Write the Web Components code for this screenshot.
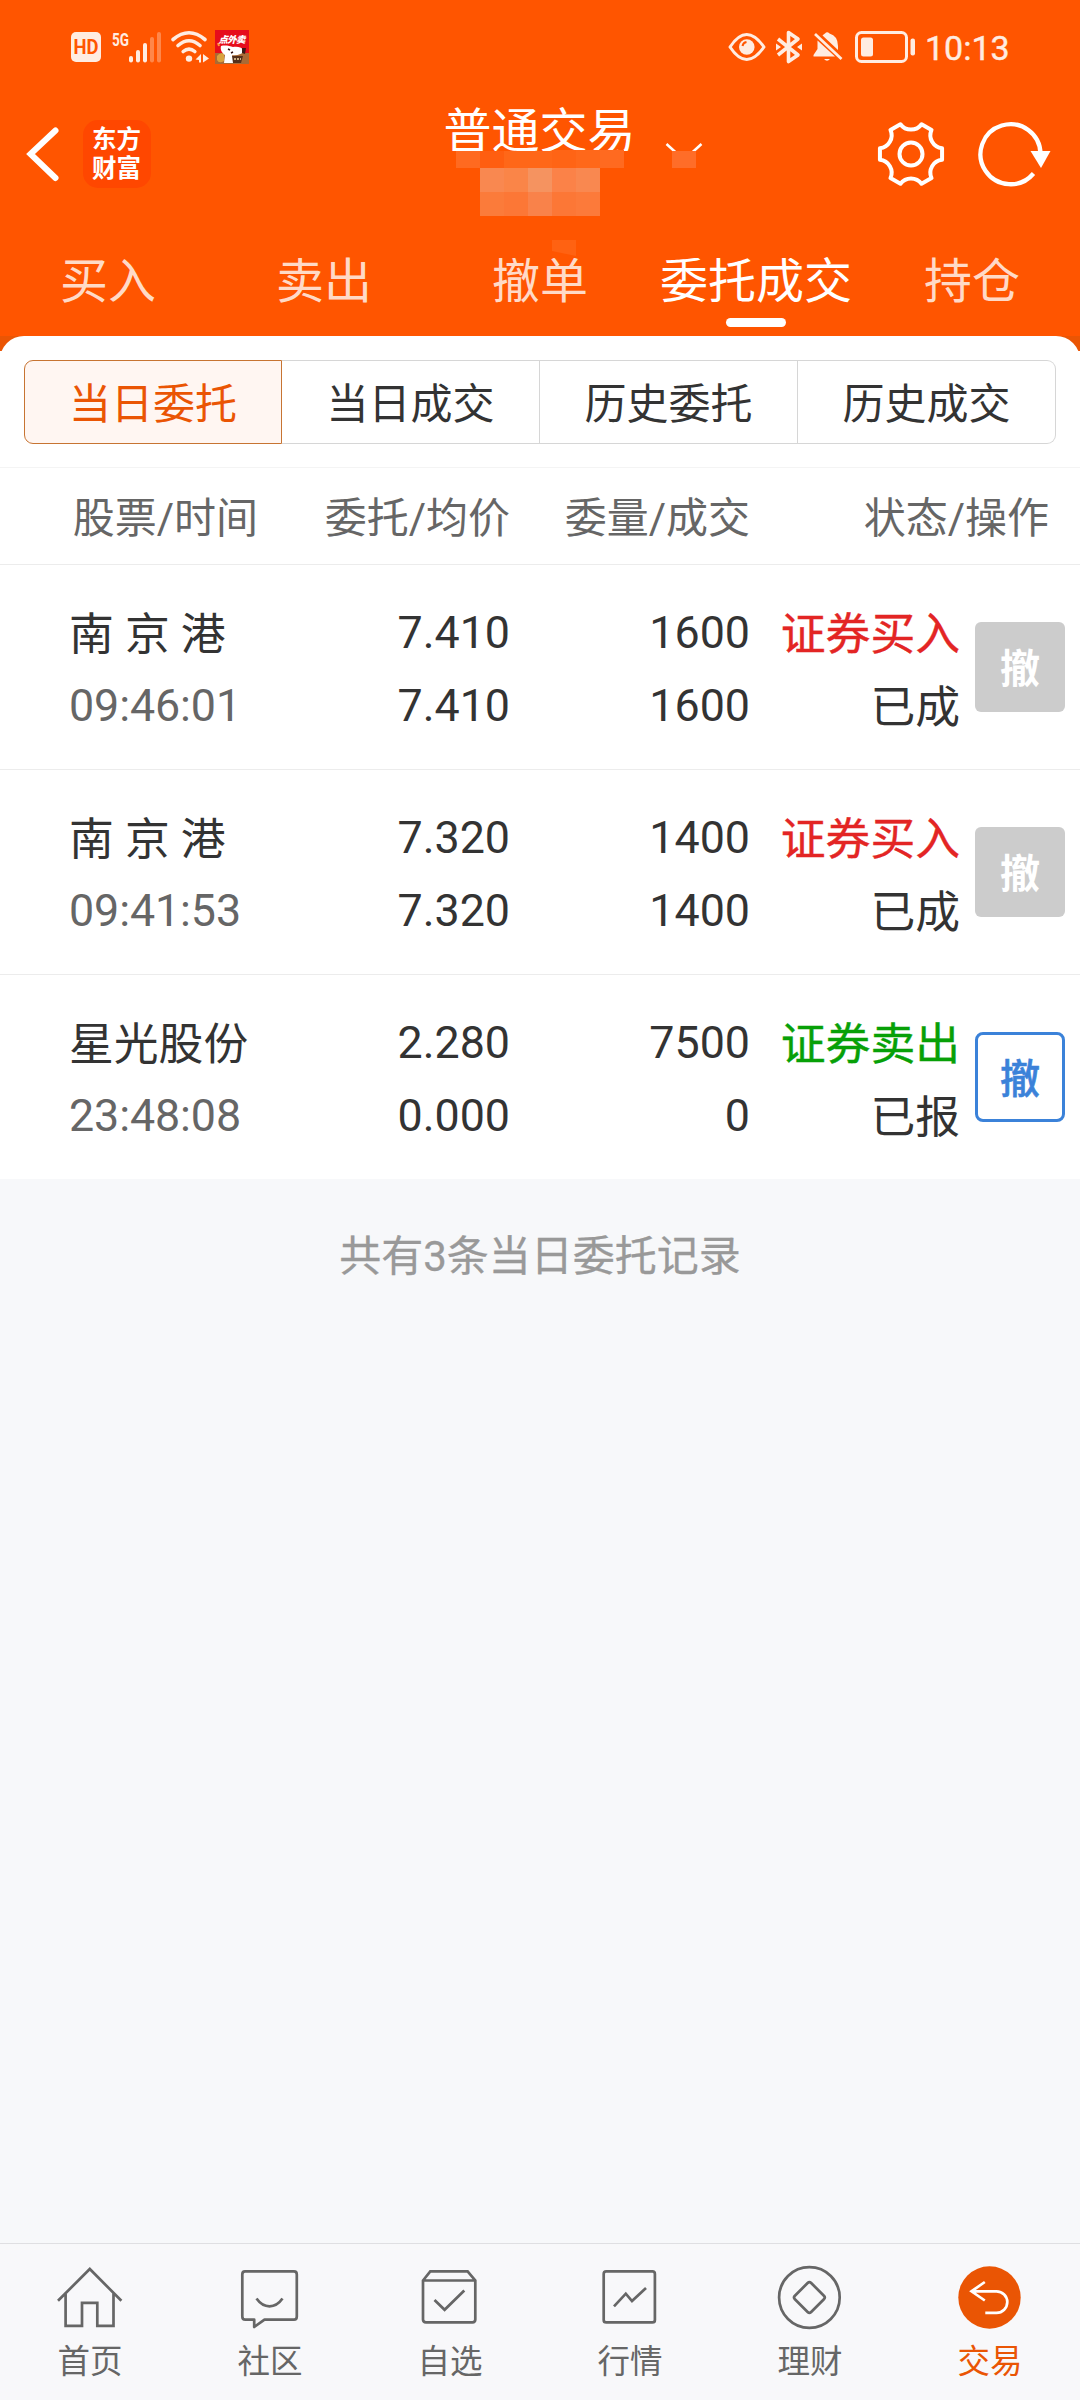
<!DOCTYPE html>
<html lang="zh-CN">
<head>
<meta charset="utf-8">
<title>普通交易</title>
<style>
html,body{margin:0;padding:0}
body{width:1080px;height:2400px;overflow:hidden;background:#f7f8fa;font-family:Roboto,"Noto Sans CJK SC",sans-serif;color:#333}
</style>
</head>
<body>
<trade-app></trade-app>
<script>
const define = (name, render) => customElements.define(name, class extends HTMLElement {
  connectedCallback() {
    if (this.shadowRoot) return;
    this.attachShadow({ mode: 'open' }).innerHTML = render(this);
  }
});

// Gear outline: six flat teeth joined by concave arcs.
const gear = (() => {
  let d = '';
  const p = a => { const r = a * Math.PI / 180; return (34 + 31.6 * Math.cos(r)).toFixed(2) + ' ' + (34 + 31.6 * Math.sin(r)).toFixed(2); };
  for (let k = 0; k < 6; k++) d += (k ? 'A13 13 0 0 0 ' : 'M') + p(60 * k - 10.5) + 'L' + p(60 * k + 10.5);
  return d + 'A13 13 0 0 0 ' + p(-10.5) + 'Z';
})();

const L = 'fill="none" stroke="currentColor"';
const icons = {
  hd: [30, 30, `<rect width="30" height="30" rx="5" fill="currentColor"/><text x="15" y="22.3" text-anchor="middle" font-size="20" font-weight="700" textLength="25" lengthAdjust="spacingAndGlyphs" fill="#ff5500">HD</text>`],
  signal: [50, 32, `<text x="0" y="14.5" font-size="18.5" font-weight="700" textLength="17" lengthAdjust="spacingAndGlyphs" fill="currentColor">5G</text>
    <g fill="currentColor"><rect x="17" y="25" width="4" height="6.5" rx="2"/><rect x="24" y="19" width="4" height="12.5" rx="2"/><rect x="31" y="12" width="4" height="19.5" rx="2"/><g opacity=".33"><rect x="38" y="6" width="4" height="25.5" rx="2"/><rect x="45" y="1" width="4" height="30.5" rx="2"/></g></g>`],
  wifi: [38, 32, `<g ${L} stroke-width="3.6" stroke-linecap="round"><path d="M2 8.500Q18-5 34 8.500"/><path d="M7 14.500Q18 5 29 14.500"/><path d="M12.2 20.500Q18 15.6 23.8 20.500"/></g><circle cx="18" cy="27.6" r="3.2" fill="currentColor"/><path d="M30 23v8.5h-2v-2.500l-3.500-.5zM32 31.500v-8.500l6 4.500z" fill="currentColor"/>`],
  promo: [34, 34, `<rect width="34" height="34" fill="#e60d1c"/><path d="M0 23h34v11H0z" fill="#a96a35"/><path d="M2 26q3-4 7-2v7q-5 3-7-1z" fill="#d9a23e"/><path d="M6 16c4-1 9 0 12 1 4-1 9 0 12 4-3 3-8 5-13 4l3 8H9l1-8c-3-2-5-5-4-9z" fill="#fff"/><path d="M27 18l4 0-1 6-3-1z" fill="#3a1c16"/><path d="M13 19l2 1m3 2l-2 1" stroke="#311" stroke-width="1.5"/><path d="M17 26h11l-2 7h-8z" fill="#54301b"/><path d="M19 29h7" stroke="#f2d7a4" stroke-width="1.6" stroke-dasharray="2 1"/><path d="M3 13l1 3" stroke="#ff9b2e" stroke-width="2"/><text x="3.5" y="13" font-size="9.5" font-weight="900" font-style="italic" textLength="27" fill="#fff">点外卖</text>`],
  eye: [38, 30, `<path d="M2 15Q18.500-10 36 15Q18.500 40 2 15Z" ${L} stroke-width="3" stroke-linejoin="round"/><circle cx="18.800" cy="15" r="7.800" fill="currentColor"/><path d="M14.500 14a5 5 0 0 1 4-4" fill="none" stroke="#ff5500" stroke-width="2"/>`],
  bt: [28, 34, `<path d="M3 9L23 25 13.500 31.500V2.500L23 9 3 25" ${L} stroke-width="3.6" stroke-linejoin="round"/><path d="M1 13.500l5 3.500-5 3.500zM27 13.500l-5 3.500 5 3.500z" fill="currentColor"/>`],
  bell: [30, 32, `<path d="M9.500 4.500Q11 3 12 2.500Q14 0 16.500 2.500Q25 5 25 15v4zM4.500 9.500l17.500 16H.5V24l4-6z" fill="currentColor"/><path d="M2 3L28.500 28" stroke="currentColor" stroke-width="2.800"/><path d="M11 28h6q-3 3.500-6 0z" fill="currentColor"/>`],
  battery: [61, 32, `<rect x="1.500" y="1.500" width="50" height="29" rx="5" ${L} stroke-width="3"/><rect x="6" y="6.500" width="12" height="19" rx="2.500" fill="currentColor"/><rect x="55.500" y="7.500" width="4.500" height="17" rx="2" fill="currentColor"/>`],
  back: [32, 58, `<path d="M28.500 5.500L3.500 29l25 24" ${L} stroke-width="6" stroke-linecap="round"/>`],
  gear: [68, 68, `<path d="${gear}" ${L} stroke-width="4" stroke-linejoin="round"/><circle cx="34" cy="34" r="11.500" ${L} stroke-width="4"/>`],
  refresh: [74, 68, `<path d="M56.500 53.500A30 30 0 1 1 63.500 34" ${L} stroke-width="4.300"/><path d="M53.500 31h20L64 48z" fill="currentColor"/>`],
  home: [68, 68, `<path d="M2 37.800L33.800 6 65.400 37.800M9.600 30.500V62.800H26V39.800H41.300V62.800H57.500V30.500" ${L} stroke-width="2.700"/>`],
  chat: [68, 68, `<path d="M9 8.400H58Q60.800 8.400 60.800 11.400V53.400Q60.800 56.600 58 56.600H28.500L18.200 64V56.600H9.300Q6.300 56.600 6.300 53.400V11.400Q6.300 8.400 9 8.400Z" ${L} stroke-width="2.700" stroke-linejoin="round"/><path d="M20.500 35.500Q26 43.300 33.500 43.300T46.500 35.500" ${L} stroke-width="2.700"/>`],
  check: [68, 68, `<path d="M7 17.500L14.300 8.400H51.600L59.300 17.500V56.500Q59.300 59.300 56.500 59.300H10Q7 59.300 7 56.500ZM7 17.500H59.300M18.500 37L28.600 46.800 48.300 27.500" ${L} stroke-width="2.700"/>`],
  quote: [68, 68, `<rect x="7.700" y="8.400" width="51.200" height="51" rx="2.500" ${L} stroke-width="2.700"/><path d="M18 43.300L29.800 30.700 36 38 50 25" ${L} stroke-width="2.700"/>`],
  wealth: [68, 68, `<circle cx="33.400" cy="34.500" r="30.300" ${L} stroke-width="2.700"/><rect x="21.900" y="23" width="23" height="23" rx="2.500" transform="rotate(45 33.400 34.500)" ${L} stroke-width="2.700"/>`],
  trade: [68, 68, `<circle cx="33.500" cy="34.500" r="31.200" fill="#ea5504"/><path d="M28.800 19L15.500 28.300 28.800 37.500M15.500 28.300H40.500A10.800 10.800 0 0 1 40.500 49.900H29.300" fill="none" stroke="#fff" stroke-width="2.700"/>`]
};
define('ui-icon', el => {
  const [w, h, body] = icons[el.getAttribute('name')];
  return `<style>:host{display:block;flex:none;width:${w}px;height:${h}px}svg{display:block;overflow:visible;font-family:Roboto,"Noto Sans CJK SC",sans-serif}</style>
  <svg width="${w}" height="${h}" viewBox="0 0 ${w} ${h}">${body}</svg>`;
});

define('status-bar', () => `<style>
:host{display:flex;align-items:center;justify-content:space-between;height:92px;padding:1px 71px 0 71px;box-sizing:border-box;color:#ffece1}
div{display:flex;align-items:center}
.l ui-icon:nth-child(2){margin-left:11px}.l ui-icon:nth-child(3){margin-left:9px}.l ui-icon:nth-child(4){margin-left:6px}
.r ui-icon:nth-child(2){margin-left:9px}.r ui-icon:nth-child(3){margin-left:10px}.r ui-icon:nth-child(4){margin-left:12px}
span{font-size:34px;line-height:40px;margin:2px 0 0 9px;width:84px;white-space:nowrap;-webkit-text-stroke:.4px}
</style>
<div class="l"><ui-icon name="hd"></ui-icon><ui-icon name="signal"></ui-icon><ui-icon name="wifi"></ui-icon><ui-icon name="promo"></ui-icon></div>
<div class="r"><ui-icon name="eye"></ui-icon><ui-icon name="bt"></ui-icon><ui-icon name="bell"></ui-icon><ui-icon name="battery"></ui-icon><span>10:13</span></div>`);

define('brand-logo', () => `<style>
:host{display:flex;justify-content:center;align-items:center;width:68px;height:68px;border-radius:15px;background:#ff4700;color:#fff;font:700 24.500px/28.500px "Noto Sans CJK SC",sans-serif}
span{width:50px;margin-bottom:3px;word-break:break-all}
</style><span>东方财富</span>`);

define('title-bar', () => `<style>
:host{display:grid;grid-template-columns:1fr 400px 1fr;align-items:center;height:124px;color:#fff;position:relative}
.l{display:flex;align-items:center;padding-left:27px;gap:24px}
.r{display:flex;align-items:center;justify-content:flex-end;padding-right:29px;gap:32px}
h1{font-weight:400;font-size:48px;line-height:56px;margin:0 1px 45px 0;text-align:center}
.m{position:absolute;left:440px;top:50px}
</style>
<div class="l"><ui-icon name="back"></ui-icon><brand-logo></brand-logo></div>
<h1>普通交易</h1>
<div class="r"><ui-icon name="gear"></ui-icon><ui-icon name="refresh"></ui-icon></div>
<svg class="m" width="360" height="116" viewBox="440 142 360 116">
<path d="M666.500 144L678 154.500 684 159 690 154.500 701.500 144" fill="none" stroke="#fff" stroke-width="2.500"/>
<path d="M440 151H800V258H440Z" fill="#ff5500"/>
<path fill="#ff6a20" d="M456 151h24v17h-24zM600 150h24v18h-24z"/>
<path fill="#ff5e10" d="M480 151h24v17h-24z"/><path fill="#ff6718" d="M504 151h48v17h-48z"/><path fill="#ff6415" d="M552 150h24v18h-24z"/><path fill="#ff681a" d="M576 150h24v18h-24z"/>
<path fill="#ff6d28" d="M672 151h24v17h-24z"/>
<path fill="#f98850" d="M480 168h24v24h-24zM576 168h24v24h-24z"/><path fill="#fa8548" d="M504 168h24v24h-24z"/><path fill="#f59360" d="M528 168h24v24h-24z"/><path fill="#fb8248" d="M552 168h24v24h-24z"/>
<path fill="#fb7b3a" d="M480 192h24v24h-24z"/><path fill="#fc7736" d="M504 192h24v24h-24zM552 192h24v24h-24z"/><path fill="#f9824a" d="M528 192h24v24h-24z"/><path fill="#fc7a3a" d="M576 192h24v24h-24z"/>
<path fill="#ff6212" d="M552 240h24v16l-24-5z"/>
</svg>`);

define('main-tabs', () => `<style>
:host{display:grid;grid-template-columns:repeat(5,1fr);height:120px;color:#ffdac7;font-size:48px;line-height:56px}
div{display:flex;flex-direction:column;align-items:center;padding-top:38px;white-space:nowrap}
.on{color:#fff}.on::after{content:"";width:60px;height:9px;border-radius:4.500px;background:#fff;margin-top:8px}
</style><div>买入</div><div>卖出</div><div>撤单</div><div class="on">委托成交</div><div>持仓</div>`);

define('segment-bar', () => `<style>
:host{display:grid;grid-template-columns:repeat(4,258px);height:84px;padding:24px 24px 23px;font-size:42px;line-height:50px}
div{box-sizing:border-box;border:1px solid #d6d6d6;border-left-width:0;display:flex;justify-content:center;padding-top:19px}
div:first-of-type{border:1px solid #c77432;border-radius:9px 0 0 9px;background:#fff6f2;color:#ea5504}
div:last-of-type{border-radius:0 9px 9px 0}
</style><div>当日委托</div><div>当日成交</div><div>历史委托</div><div>历史成交</div>`);

define('order-head', () => `<style>
:host{display:grid;grid-template-columns:266px 244px 240px 299px;height:96px;border-top:1px solid #f4f4f4;border-bottom:1px solid #ececec;font-size:42px;line-height:102px;color:#666;text-align:right}
span:first-of-type{padding-right:8px}
</style><span>股票/时间</span><span>委托/均价</span><span>委量/成交</span><span>状态/操作</span>`);

define('cancel-button', () => `<style>
:host{display:flex;justify-content:center;width:90px;height:90px;box-sizing:border-box;border-radius:6px;background:#ccc;color:#fff;font-size:40px;font-weight:700;line-height:96px}
:host([active]){background:#fff;color:#3b82d9;border:3px solid #3b82d9;border-radius:8px;line-height:90px;font-weight:500;-webkit-text-stroke:.6px}
</style><slot></slot>`);

define('order-row', el => { const a = n => el.getAttribute(n); return `<style>
:host{display:grid;grid-template-columns:69px 197px 244px 240px 210px 90px;height:204px;align-items:center;border-bottom:1px solid #ececec;font-size:44.800px;line-height:73px}
:host(:last-of-type){border-bottom:0}
div{display:flex;flex-direction:column;text-align:right;padding-top:4px;white-space:nowrap}
.n{grid-column:2;text-align:left}.n .t{color:#666;letter-spacing:-.1px}
.zh{transform:translateY(1.500px)}
.buy{color:#e32524}.sell{color:#07a007}
.buy,.sell{-webkit-text-stroke:.4px}
cancel-button{margin-left:15px}
</style>
<div class="n"><span class="zh">${a('name')}</span><span class="t">${a('time')}</span></div>
<div><span>${a('price')}</span><span>${a('avg')}</span></div>
<div><span>${a('qty')}</span><span>${a('done')}</span></div>
<div class="zh"><span class="${a('side')}">${a('side') === 'buy' ? '证券买入' : '证券卖出'}</span><span>${a('state')}</span></div>
<cancel-button ${el.hasAttribute('open') ? 'active' : ''}>撤</cancel-button>`; });

define('nav-item', el => `<style>
:host{display:flex;flex-direction:column;align-items:center;color:#666;font-size:32.500px;line-height:40px;padding-top:19px;gap:11px}
:host([active]){color:#ea5504}
</style><ui-icon name="${el.getAttribute('icon')}"></ui-icon><span><slot></slot></span>`);

define('bottom-nav', () => `<style>
:host{display:grid;grid-template-columns:repeat(6,1fr);height:156px;border-top:1px solid #dfdfe2;background:#f8f8fa}
</style><nav-item icon="home">首页</nav-item><nav-item icon="chat">社区</nav-item><nav-item icon="check">自选</nav-item><nav-item icon="quote">行情</nav-item><nav-item icon="wealth">理财</nav-item><nav-item icon="trade" active>交易</nav-item>`);

define('trade-app', () => `<style>
:host{display:flex;flex-direction:column;width:1080px;height:2400px;background:#f7f8fa}
header{background:#ff5500;height:336px}
.wrap{background:linear-gradient(#ea5504 15px,#fff 15px)}
.sheet{background:#fff;border-radius:24px 24px 0 0}
p{margin:53px 0 0;text-align:center;font-size:42px;line-height:50px;color:#999;-webkit-text-stroke:.3px}
main{flex:1}
</style>
<header><status-bar></status-bar><title-bar></title-bar><main-tabs></main-tabs></header>
<main>
<div class="wrap"><div class="sheet">
<segment-bar></segment-bar><order-head></order-head>
<order-row name="南 京 港" time="09:46:01" price="7.410" avg="7.410" qty="1600" done="1600" side="buy" state="已成"></order-row>
<order-row name="南 京 港" time="09:41:53" price="7.320" avg="7.320" qty="1400" done="1400" side="buy" state="已成"></order-row>
<order-row name="星光股份" time="23:48:08" price="2.280" avg="0.000" qty="7500" done="0" side="sell" state="已报" open></order-row>
</div></div>
<p>共有3条当日委托记录</p>
</main>
<bottom-nav></bottom-nav>`);
</script>
</body>
</html>
